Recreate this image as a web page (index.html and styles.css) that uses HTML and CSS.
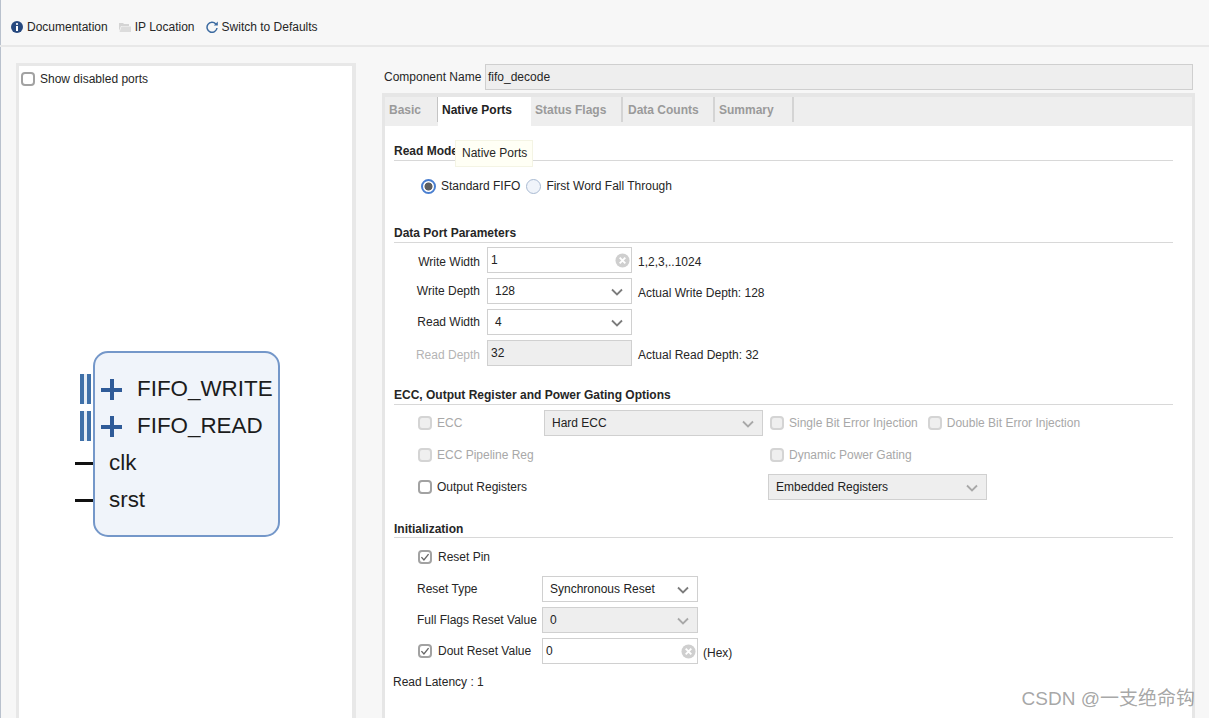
FILE: index.html
```html
<!DOCTYPE html>
<html lang="en">
<head>
<meta charset="utf-8">
<title>FIFO Generator</title>
<link rel="stylesheet" href="styles.css">
</head>
<body>
<svg class="defs" width="0" height="0" aria-hidden="true">
  <symbol id="chev" viewBox="0 0 12 8"><path d="M1 1.5 6 6.5 11 1.5" fill="none" stroke="currentColor" stroke-width="1.8"/></symbol>
  <symbol id="clear" viewBox="0 0 16 16"><circle cx="8" cy="8" r="7.5" fill="#cfcfcf"/><path d="M5 5 11 11M11 5 5 11" stroke="#fff" stroke-width="2"/></symbol>
  <symbol id="tick" viewBox="0 0 14 14"><path d="M2 7.2 5.5 11 12 3" fill="none" stroke="#666" stroke-width="1.9"/></symbol>
</svg>
<header class="toolbar">
  <div class="tool">
    <svg class="tool-icon" viewBox="0 0 12 12"><circle cx="6" cy="6" r="6" fill="#27497f"/><circle cx="6" cy="3" r="1.1" fill="#fff"/><rect x="5" y="5" width="2" height="5" fill="#fff"/></svg>
    <span>Documentation</span>
  </div>
  <div class="tool">
    <svg class="tool-icon" viewBox="0 0 12 12"><path d="M0 2h4l1 1h5v2H2L0 10z" fill="#d4d4d4"/><path d="M2.5 5.5H12V11H0.5z" fill="#dcdcdc"/></svg>
    <span>IP Location</span>
  </div>
  <div class="tool">
    <svg class="tool-icon" viewBox="0 0 12 12"><path d="M9.8 3A5 5 0 1 0 11 7" fill="none" stroke="#3b6aa0" stroke-width="1.5"/><path d="M11.8 0.4V4.4H7.8z" fill="#3b6aa0"/></svg>
    <span>Switch to Defaults</span>
  </div>
</header>
<main class="main">
  <section class="ports">
    <label class="check show-ports"><span class="box"></span>Show disabled ports</label>
    <div class="symbol">
      <div class="port bus"><span class="bars"></span><span class="plus"></span><span>FIFO_WRITE</span></div>
      <div class="port bus"><span class="bars"></span><span class="plus"></span><span>FIFO_READ</span></div>
      <div class="port"><span class="pin"></span><span>clk</span></div>
      <div class="port"><span class="pin"></span><span>srst</span></div>
    </div>
  </section>
  <section class="config">
    <div class="name-row">
      <span class="name-label">Component Name</span>
      <div class="name-input">fifo_decode</div>
    </div>
    <div class="tabs">
      <nav class="tabstrip">
        <span class="tab">Basic</span>
        <span class="tab active">Native Ports</span>
        <span class="tab sep">Status Flags</span>
        <span class="tab sep data">Data Counts</span>
        <span class="tab sep">Summary</span>
      </nav>
      <div class="tooltip">Native Ports</div>
      <div class="page">
        <h2 class="head first">Read Mode</h2>
        <div class="radios">
          <span class="radio on"></span><span>Standard FIFO</span>
          <span class="radio second"></span><span>First Word Fall Through</span>
        </div>

        <h2 class="head data-head">Data Port Parameters</h2>
        <div class="port-grid">
          <span class="lbl low">Write Width</span>
          <div class="field input">1<svg class="clear"><use href="#clear"/></svg></div>
          <span class="hint">1,2,3,..1024</span>
          <span class="lbl">Write Depth</span>
          <div class="field select">128<svg class="chev"><use href="#chev"/></svg></div>
          <span class="hint">Actual Write Depth: 128</span>
          <span class="lbl">Read Width</span>
          <div class="field select">4<svg class="chev"><use href="#chev"/></svg></div>
          <span></span>
          <span class="lbl off low">Read Depth</span>
          <div class="field input grey">32</div>
          <span class="hint">Actual Read Depth: 32</span>
        </div>

        <h2 class="head ecc-head">ECC, Output Register and Power Gating Options</h2>
        <div class="ecc-grid">
          <label class="check off"><span class="box"></span>ECC</label>
          <div class="field select grey medium">Hard ECC<svg class="chev dim"><use href="#chev"/></svg></div>
          <div class="ecc-pair">
            <label class="check off"><span class="box"></span>Single Bit Error Injection</label>
            <label class="check off"><span class="box"></span>Double Bit Error Injection</label>
          </div>
          <label class="check off"><span class="box"></span>ECC Pipeline Reg</label>
          <span></span>
          <div class="ecc-pair"><label class="check off"><span class="box"></span>Dynamic Power Gating</label></div>
          <label class="check"><span class="box"></span>Output Registers</label>
          <span></span>
          <div class="field select grey medium">Embedded Registers<svg class="chev dim"><use href="#chev"/></svg></div>
        </div>

        <h2 class="head init-head">Initialization</h2>
        <label class="check reset-pin"><span class="box"><svg class="tick"><use href="#tick"/></svg></span>Reset Pin</label>
        <div class="init-grid">
          <span class="init-lbl">Reset Type</span>
          <div class="field select">Synchronous Reset<svg class="chev"><use href="#chev"/></svg></div>
          <span></span>
          <span class="init-lbl">Full Flags Reset Value</span>
          <div class="field select grey">0<svg class="chev dim"><use href="#chev"/></svg></div>
          <span></span>
          <label class="check"><span class="box"><svg class="tick"><use href="#tick"/></svg></span>Dout Reset Value</label>
          <div class="field input">0<svg class="clear"><use href="#clear"/></svg></div>
          <span class="hint">(Hex)</span>
        </div>
        <p class="latency">Read Latency : 1</p>
      </div>
    </div>
  </section>
</main>
<div class="watermark">CSDN @一支绝命钩</div>
</body>
</html>
```
FILE: styles.css
```css
* { box-sizing: border-box; }
html, body { margin: 0; height: 718px; overflow: hidden; }
body {
  background: #f7f7f7;
  color: #262626;
  font: 12px/16px "Liberation Sans", Arial, "Noto Sans CJK SC", sans-serif;
  position: relative;
  box-shadow: inset 1px 0 0 #b9c1cd;
}
.defs { position: absolute; }

.toolbar {
  height: 47px;
  display: flex;
  align-items: center;
  padding: 8px 0 0 11px;
  gap: 11px;
  border-bottom: 2px solid #e8e8e8;
}
.tool { display: flex; align-items: center; gap: 4px; }
.tool-icon { width: 12px; height: 12px; }

.main { display: flex; height: 671px; padding-left: 16px; }

.ports {
  width: 340px;
  height: 655px;
  margin-top: 16px;
  background: #fff;
  border: 3px solid #e8e8e8;
  border-bottom: 0;
  border-right-width: 4px;
  padding: 5px 0 0 2px;
}
.check { display: flex; align-items: center; gap: 5px; }
.box {
  width: 14px;
  height: 14px;
  flex: none;
  border: 2px solid #a2a2a2;
  border-radius: 4px;
  background: #fff;
  display: block;
}
.check.off { color: #a8a8a8; }
.check.off .box { border-color: #d4d4d4; background: #efefef; }
.tick { display: block; width: 10px; height: 10px; }
.show-ports { height: 16px; }

.symbol {
  position: relative;
  width: 187px;
  height: 186px;
  margin: 264px 0 0 72px;
  background: #f0f4fa;
  border: 2px solid #7497c9;
  border-radius: 15px;
  padding-top: 17px;
  font-size: 22.4px;
  line-height: 37px;
  color: #1c1c1c;
}
.port { position: relative; height: 37px; padding-left: 14px; }
.port.bus { padding-left: 42px; }
.bars {
  position: absolute;
  left: -15px;
  top: 4px;
  width: 11px;
  height: 30px;
  border-left: 4px solid #3f70a8;
  border-right: 4px solid #3f70a8;
  background: #e6edf5;
}
.plus {
  position: absolute;
  left: 6px;
  top: 9px;
  width: 21px;
  height: 21px;
  background:
    linear-gradient(#2f5b98, #2f5b98) center / 21px 4px no-repeat,
    linear-gradient(#2f5b98, #2f5b98) center / 4px 21px no-repeat;
}
.pin {
  position: absolute;
  left: -20px;
  top: 18px;
  width: 18px;
  height: 3px;
  background: #111;
}

.config { width: 813px; margin-left: 26px; padding-top: 17px; }
.name-row { display: flex; align-items: center; height: 26px; padding-left: 2px; }
.name-label { width: 101px; }
.name-input {
  width: 708px;
  height: 26px;
  line-height: 24px;
  padding-left: 2px;
  background: #eee;
  border: 1px solid #cfcfcf;
}

.tabs {
  position: relative;
  margin-top: 3px;
  height: 625px;
  border: solid #e6e6e6;
  border-width: 4px 3px 0;
  background: #fff;
}
.tabstrip {
  display: grid;
  grid-template-columns: 53px 93px 92px 92px 79px;
  height: 29px;
  background: #eee;
  font-weight: bold;
  color: #9a9a9a;
}
.tab { padding: 5px 0 0 4px; height: 25px; }
.tab.data { padding-left: 5px; }
.tab.sep { border-right: 2px solid #d4d4d4; }
.tab:first-child { border-right: 1px solid #c4c4c4; }
.tab.active { background: #fff; color: #222; height: 29px; }
.tooltip {
  position: absolute;
  left: 70px;
  top: 43px;
  width: 78px;
  height: 27px;
  padding: 4px 0 0 6px;
  background: #fffff5;
  border: 1px solid #f4f4e4;
}

.page { padding: 0 19px 0 9px; }
.head {
  margin: 0;
  height: 19px;
  padding-top: 1px;
  font-size: 12px;
  line-height: 16px;
  font-weight: bold;
  border-bottom: 1px solid #d8d8d8;
}
.head.first { margin-top: 16px; }
.data-head { margin-top: 28px; }
.ecc-head { margin-top: 20px; }
.init-head { margin-top: 20px; height: 18px; }

.radios { display: flex; align-items: center; height: 20px; margin: 15px 0 0 27px; gap: 5px; }
.radio {
  width: 15px;
  height: 15px;
  border-radius: 50%;
  border: 1.5px solid #a9bad2;
  background: #f0f4fa;
}
.radio.second { margin-left: 1px; }
.radio.on {
  border: 2px solid #4a7fd0;
  background: radial-gradient(circle, #5e5e5e 0 3.6px, #fff 4.4px);
}

.port-grid {
  display: grid;
  grid-template-columns: 87px 145px auto;
  grid-auto-rows: 26px;
  row-gap: 5px;
  column-gap: 5px;
  align-items: center;
  margin: 4px 0 0 0;
  padding-left: 1px;
}
.lbl { text-align: right; padding-right: 2px; }
.lbl.low { margin-top: 3px; }
.lbl.off { color: #b4b4b4; }
.port-grid .hint { margin-left: 1px; }
.field {
  display: flex;
  align-items: center;
  justify-content: space-between;
  height: 26px;
  background: #fff;
  border: 1px solid #d0d0d0;
  color: #222;
}
.field.input { padding-left: 3px; padding-right: 1px; }
.field.select { padding-left: 7px; padding-right: 8px; }
.field.grey { background: #eee; }
.field.medium { width: 219px; }
.hint { margin-top: 3px; }
.chev { width: 12px; height: 8px; color: #7c7c7c; margin-top: 1px; }
.chev.dim { color: #a8a8a8; }
.clear { width: 15px; height: 15px; flex: none; }

.ecc-grid {
  display: grid;
  grid-template-columns: 126px 224px auto;
  grid-auto-rows: 26px;
  row-gap: 6px;
  align-items: center;
  margin: 5px 0 0 24px;
}
.ecc-pair { display: flex; gap: 10px; padding-left: 2px; }

.reset-pin { height: 20px; margin: 9px 0 0 24px; gap: 6px; }
.init-grid {
  display: grid;
  grid-template-columns: 125px 156px auto;
  grid-auto-rows: 26px;
  row-gap: 5px;
  align-items: center;
  margin: 9px 0 0 23px;
}
.init-lbl { margin-top: -1px; }
.init-grid .check { margin-left: 1px; gap: 6px; }
.init-grid .hint { margin-left: 5px; }
.latency { margin: 10px 0 0 -1px; }

.watermark {
  position: absolute;
  right: 14px;
  top: 687px;
  font: 19px/24px "Liberation Sans", "Noto Sans CJK SC", sans-serif;
  color: rgba(110, 110, 110, 0.62);
}
```
